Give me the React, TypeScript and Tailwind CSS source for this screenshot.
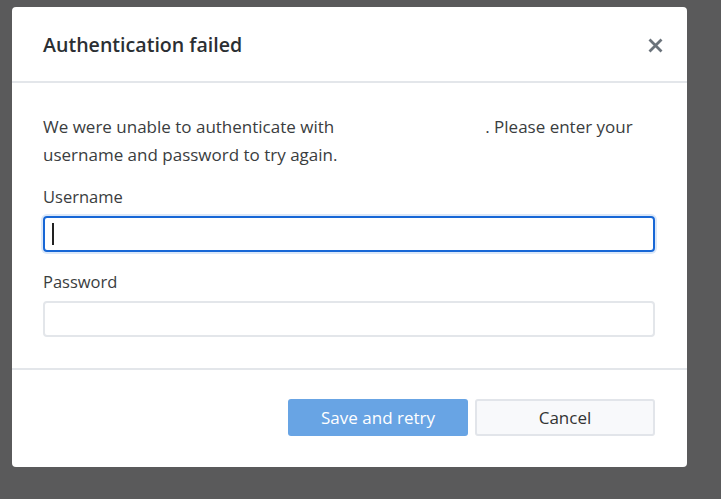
import { useState } from "react"

export default function App() {
  const [username, setUsername] = useState("")
  const [password, setPassword] = useState("")

  return (
    <div className="min-h-screen bg-[#5a5a5b] pl-[12px] pt-[7px] font-['Open_Sans',sans-serif]">
      <div className="w-[675px] h-[460px] rounded-[4px] bg-white flex flex-col overflow-hidden">
        {/* header */}
        <div className="h-[76px] shrink-0 flex items-center justify-between pl-[31px] pr-[24px] pt-[2px] border-b-2 border-[#e3e6ea]">
          <h2 className="text-[19.6px] font-semibold text-[#2b2f33]">Authentication failed</h2>
          <button className="w-[16px] h-[16px] flex items-center justify-center">
            <svg width="15" height="15" viewBox="0 0 15 15">
              <path d="M1.5 1.5 13.5 13.5 M13.5 1.5 1.5 13.5" stroke="#6b737b" strokeWidth="2.8" fill="none" />
            </svg>
          </button>
        </div>

        {/* body */}
        <div className="h-[285px] shrink-0 pt-[30px] px-[31px] text-[#3a3d40] text-[16.5px]">
          <p className="text-[17px] leading-[28px]">
            We were unable to authenticate with<span className="ml-[151px]">. Please enter your</span> username and
            password to try again.
          </p>
          <label className="block mt-[16px] leading-[24px]">Username</label>
          <div className="relative mt-[7px]">
            <input
              value={username}
              onChange={(e) => setUsername(e.target.value)}
              className="w-[612px] h-[36px] rounded-[4px] border-2 border-[#1767d6] px-[9px] outline-none caret-transparent shadow-[0_0_0_2px_#dbe8f9]"
            />
            <span className="absolute left-[9px] top-[7px] w-[2px] h-[22px] bg-[#222]"></span>
          </div>
          <label className="block mt-[18px] leading-[24px]">Password</label>
          <input
            type="password"
            value={password}
            onChange={(e) => setPassword(e.target.value)}
            className="mt-[7px] w-[612px] h-[36px] rounded-[4px] border-2 border-[#e3e6ea] px-[9px] outline-none"
          />
        </div>

        {/* footer */}
        <div className="flex-1 border-t-2 border-[#e3e6ea] flex justify-end items-start pt-[29px] pr-[32px] gap-[7px]">
          <button className="w-[180px] h-[37px] rounded-[3px] bg-[#68a4e4] text-white text-[17px]">Save and retry</button>
          <button className="w-[180px] h-[37px] rounded-[3px] bg-[#f8f9fb] border-2 border-[#e2e5ea] text-[#333] text-[17px]">
            Cancel
          </button>
        </div>
      </div>
    </div>
  )
}
